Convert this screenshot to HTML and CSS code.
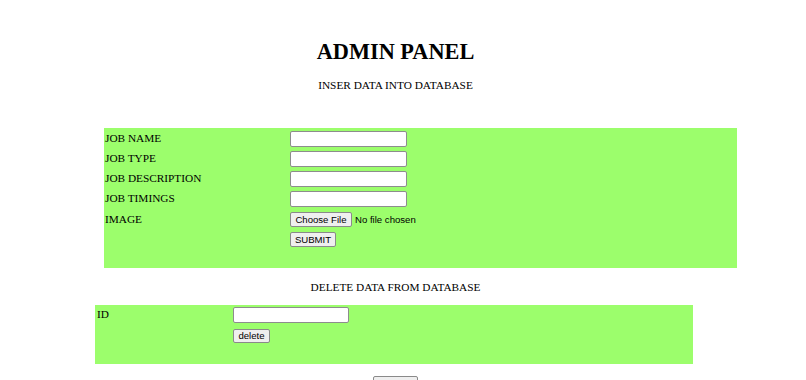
FILE: index.html
```html
<!DOCTYPE html>
<html>
<head>
<meta charset="utf-8">
<title>Admin Panel</title>
<link rel="stylesheet" href="styles.css">
</head>
<body>
<div class="page">
  <h1 class="title">ADMIN PANEL</h1>
  <p class="heading first">INSER DATA INTO DATABASE</p>
  <form class="panel insert">
    <div class="row"><span class="label">JOB NAME</span><input class="field" type="text"></div>
    <div class="row"><span class="label">JOB TYPE</span><input class="field" type="text"></div>
    <div class="row"><span class="label">JOB DESCRIPTION</span><input class="field" type="text"></div>
    <div class="row"><span class="label">JOB TIMINGS</span><input class="field" type="text"></div>
    <div class="row shift"><span class="label">IMAGE</span><span class="file"><button type="button" class="btn choose">Choose File</button><span class="nofile">No file chosen</span></span></div>
    <div class="row shift"><span class="label"></span><button type="button" class="btn submit">SUBMIT</button></div>
  </form>
  <p class="heading second">DELETE DATA FROM DATABASE</p>
  <form class="panel remove">
    <div class="row"><span class="label">ID</span><input class="field" type="text"></div>
    <div class="row gap"><span class="label"></span><button type="button" class="btn del">delete</button></div>
  </form>
  <div class="logout"><button type="button" class="btn out">Logout</button></div>
</div>
</body>
</html>
```
FILE: styles.css
```css
html, body {
  margin: 0;
  padding: 0;
  background: #ffffff;
  overflow: hidden;
}
body {
  font-family: "Liberation Serif", "Times New Roman", serif;
  color: #000;
}
.page {
  width: 791px;
  padding-top: 39px;
}
.title {
  margin: 0;
  text-align: center;
  font-size: 22.3px;
  line-height: 25px;
  font-weight: bold;
}
.heading {
  margin: 0;
  text-align: center;
  font-size: 11.3px;
  line-height: 13px;
}
.heading.first { margin-top: 15px; }
.heading.second { margin-top: 13px; }
.panel {
  background: #9cfe6c;
  box-sizing: border-box;
  display: flex;
  flex-direction: column;
}
.insert {
  margin: 36px 0 0 104px;
  width: 633px;
  height: 140px;
  padding: 3px 0 0 1px;
  gap: 4px;
}
.remove {
  margin: 11px 0 0 95px;
  width: 598px;
  height: 59px;
  padding: 2px 0 0 2px;
  gap: 6px;
}
.row {
  display: flex;
  align-items: flex-start;
}
.row.shift { margin-top: 1px; }
.label {
  font-size: 11.3px;
  line-height: 13px;
  padding-top: 1px;
  white-space: nowrap;
}
.insert .label { width: 185px; }
.remove .label { width: 136px; }
.field {
  box-sizing: border-box;
  width: 117px;
  height: 16px;
  margin: 0;
  padding: 0 2px;
  border: 1px solid #8d8d8d;
  border-radius: 2px;
  background: #fff;
}
.remove .field { width: 116px; }
.file {
  display: flex;
  align-items: center;
}
.btn {
  box-sizing: border-box;
  margin: 0;
  padding: 0;
  height: 15px;
  font-family: "Liberation Sans", Arial, sans-serif;
  font-size: 9.6px;
  line-height: 13px;
  color: #000;
  background: #efefef;
  border: 1px solid #8a8a8a;
  border-radius: 2px;
  text-align: center;
}
.choose { width: 62px; }
.submit { width: 46px; }
.del { width: 37px; height: 14px; line-height: 12px; }
.nofile {
  font-family: "Liberation Sans", Arial, sans-serif;
  font-size: 9.6px;
  margin-left: 3px;
}
.logout {
  display: flex;
  justify-content: center;
  margin-top: 12px;
}
.out { width: 45px; }
```
